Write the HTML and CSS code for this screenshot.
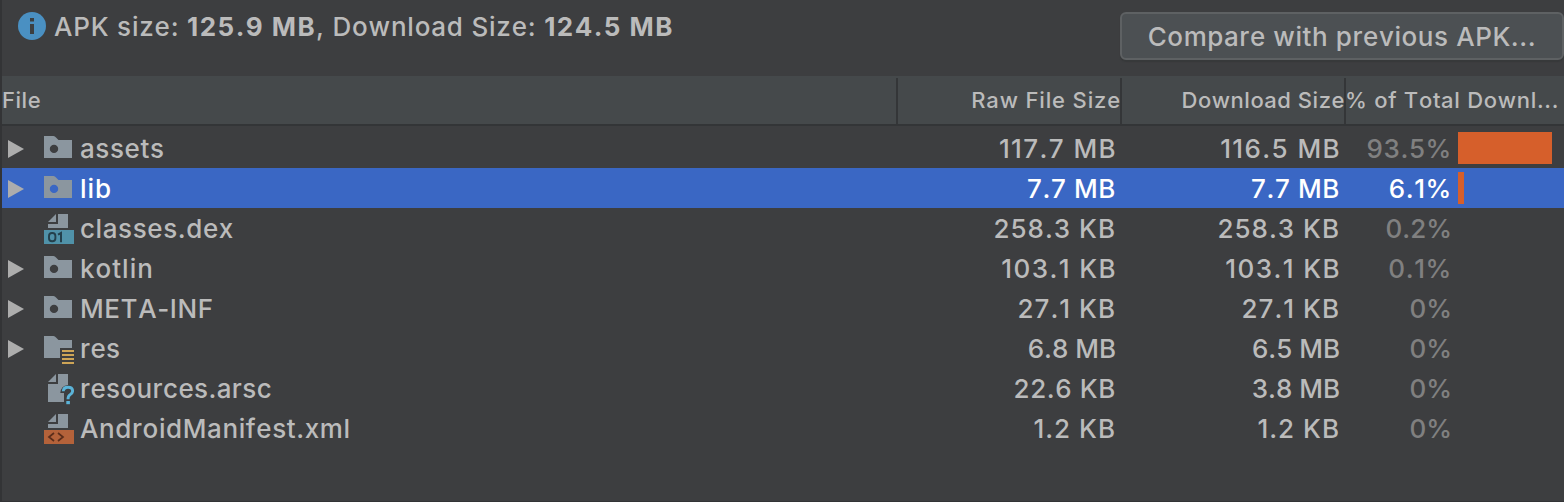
FILE: index.html
```html
<!DOCTYPE html>
<html lang="en">
<head>
<meta charset="utf-8">
<title>APK Analyzer</title>
<link rel="stylesheet" href="styles.css">
</head>
<body>
<svg class="defs" width="0" height="0">
  <defs>
    <symbol id="arrow" viewBox="0 0 16 18"><path d="M0 0L16 9L0 18Z" fill="#adadad"/></symbol>
    <symbol id="folder" viewBox="0 0 30 40"><path fill-rule="evenodd" d="M0 8H9.5Q11 8 12 9.5L14.5 12H28V30H0ZM10 16.7a4.2 4.2 0 1 0 0 8.4a4.2 4.2 0 0 0 0-8.4Z" fill="#8b969f"/></symbol>
    <symbol id="res" viewBox="0 0 30 40"><path d="M0 8H9.5Q11 8 12 9.5L14.5 12H28V20H16V30H0Z" fill="#8b969f"/><path d="M16 20h14v1.7H16z" fill="#3d3e40"/><path d="M18 22h12v2H18zM18 26h12v2H18zM18 30h12v2H18zM18 34h12v2H18z" fill="#cda456"/></symbol>
    <symbol id="dex" viewBox="0 0 30 40"><path d="M12 6V14H4ZM14 6H24V20H4V16H14Z" fill="#8b969f"/><path d="M0 22H30V36H0Z" fill="#5092a9"/><rect x="5" y="25" width="6.4" height="8.2" rx="3" fill="none" stroke="#24404c" stroke-width="1.9"/><path d="M14 26.6L17 25V34.2" fill="none" stroke="#24404c" stroke-width="2"/></symbol>
    <symbol id="arsc" viewBox="0 0 30 40"><path d="M12 6V14H4ZM14 6H24V17Q17 17.5 16.3 25H20V34H4V16H14Z" fill="#8b969f"/><path d="M19.3 23.2Q19.5 19.3 24 19.3Q28.6 19.3 28.6 23Q28.6 25 26.2 26.6Q24 28 24 31.2" fill="none" stroke="#5bb3d8" stroke-width="2.9"/><path d="M22.3 33h3.6v3.2h-3.6z" fill="#5bb3d8"/></symbol>
    <symbol id="xml" viewBox="0 0 30 40"><path d="M12 6V14H4ZM14 6H24V20H4V16H14Z" fill="#8b969f"/><path d="M0 22H30V36H0Z" fill="#b4623a"/><path d="M10 25L5 29L10 33M14 25L19 29L14 33" fill="none" stroke="#5a2d1b" stroke-width="1.7"/></symbol>
  </defs>
</svg>
<div class="panel">
  <header class="summary">
    <svg class="info" viewBox="0 0 28 28"><circle cx="14" cy="14" r="14" fill="#4a90c2"/><path d="M12 6h4v3.6h-4zM12 12h4v10h-4z" fill="#3c3f41"/></svg>
    <div class="sizes"><span>APK size: </span><b>125.9 MB</b><span>, Download Size: </span><b>124.5 MB</b></div>
    <button class="compare">Compare with previous APK...</button>
  </header>
  <div class="cols head">
    <div class="hcell name"><span>File</span></div>
    <div class="hcell raw"><span>Raw File Size</span></div>
    <div class="hcell"><span>Download Size</span></div>
    <div class="hcell last"><span>% of Total Downl...</span></div>
  </div>
  <div class="rows">
    <div class="cols row"><div class="file"><svg class="arrow"><use href="#arrow"/></svg><svg class="icon"><use href="#folder"/></svg><span>assets</span></div><div class="num wide">117.7 MB</div><div class="num wide">116.5 MB</div><div class="pct"><span>93.5%</span><i class="bar" style="width:94px"></i></div></div>
    <div class="cols row selected"><div class="file"><svg class="arrow"><use href="#arrow"/></svg><svg class="icon"><use href="#folder"/></svg><span class="loose">lib</span></div><div class="num">7.7 MB</div><div class="num">7.7 MB</div><div class="pct"><span>6.1%</span><i class="bar" style="width:6px"></i></div></div>
    <div class="cols row"><div class="file"><i class="arrow"></i><svg class="icon"><use href="#dex"/></svg><span>classes.dex</span></div><div class="num loose">258.3 KB</div><div class="num loose">258.3 KB</div><div class="pct tight"><span>0.2%</span></div></div>
    <div class="cols row"><div class="file"><svg class="arrow"><use href="#arrow"/></svg><svg class="icon"><use href="#folder"/></svg><span class="loose">kotlin</span></div><div class="num wide">103.1 KB</div><div class="num wide">103.1 KB</div><div class="pct"><span>0.1%</span></div></div>
    <div class="cols row"><div class="file"><svg class="arrow"><use href="#arrow"/></svg><svg class="icon"><use href="#folder"/></svg><span>META-INF</span></div><div class="num loose">27.1 KB</div><div class="num loose">27.1 KB</div><div class="pct tight"><span>0%</span></div></div>
    <div class="cols row"><div class="file"><svg class="arrow"><use href="#arrow"/></svg><svg class="icon"><use href="#res"/></svg><span class="snug">res</span></div><div class="num tight">6.8 MB</div><div class="num tight">6.5 MB</div><div class="pct tight"><span>0%</span></div></div>
    <div class="cols row"><div class="file"><i class="arrow"></i><svg class="icon"><use href="#arsc"/></svg><span class="snug">resources.arsc</span></div><div class="num">22.6 KB</div><div class="num tight">3.8 MB</div><div class="pct tight"><span>0%</span></div></div>
    <div class="cols row"><div class="file"><i class="arrow"></i><svg class="icon"><use href="#xml"/></svg><span>AndroidManifest.xml</span></div><div class="num loose">1.2 KB</div><div class="num loose">1.2 KB</div><div class="pct tight"><span>0%</span></div></div>
  </div>
</div>
</body>
</html>
```
FILE: styles.css
```css
* { box-sizing: border-box; }
body { margin: 0; background: #3d3e40; color: #bbb; font: 450 26px/40px Inter, sans-serif; letter-spacing: 0.6px; font-kerning: none; overflow: hidden; }
.defs { position: absolute; }
.panel { height: 502px; border-left: 2px solid #333436; border-bottom: 1px solid #333436; }
.summary { display: flex; align-items: flex-start; height: 76px; padding-left: 16px; }
.info { width: 28px; height: 28px; margin-top: 12px; flex: none; }
.sizes { margin: 7px 0 0 8px; white-space: pre; letter-spacing: 0.8px; }
.sizes b { font-weight: 700; letter-spacing: 1.45px; }
.compare { width: 444px; height: 48px; margin: 12px 0 0 auto; padding: 2px 0 0; flex: none; border: 2px solid #5e6163; border-radius: 6px; background: #4c5053; color: #bbb; font: inherit; letter-spacing: 0.58px; box-shadow: 0 2px 1px #37393a; white-space: nowrap; }
.cols { display: grid; grid-template-columns: 896px 224px 224px 1fr; }
.head { height: 50px; background: #45494b; border-bottom: 2px solid #333537; font-size: 22px; line-height: 48px; letter-spacing: 0.54px; }
.hcell { height: 46px; margin-top: 2px; line-height: 45px; border-right: 2px solid #343638; text-align: right; white-space: nowrap; }
.hcell span { margin-right: -1px; }
.hcell.name, .hcell.last { text-align: left; }
.raw { letter-spacing: 0.85px; }
.hcell.last { border: 0; letter-spacing: 0.72px; }
.hcell.last span { margin-left: -1px; }
.rows { padding-top: 2px; }
.row { height: 40px; line-height: 41px; white-space: nowrap; }
.selected { background: #3a67c4; color: #fff; }
.file { display: flex; padding-left: 6px; }
.arrow { width: 16px; height: 18px; margin-top: 12px; flex: none; }
.icon { width: 30px; height: 40px; margin: 0 6px 0 20px; flex: none; }
.num { text-align: right; padding-right: 6px; }
.wide { letter-spacing: 1.4px; padding-right: 5px; }
.loose { letter-spacing: 1px; }
.snug { letter-spacing: 0.38px; }
.tight { letter-spacing: 0; }
.pct { display: flex; color: #808080; }
.pct span { width: 106px; text-align: right; }
.selected .pct { color: #fff; }
.bar { height: 32px; margin: 4px 0 0 6px; background: #d65f2b; }
```
